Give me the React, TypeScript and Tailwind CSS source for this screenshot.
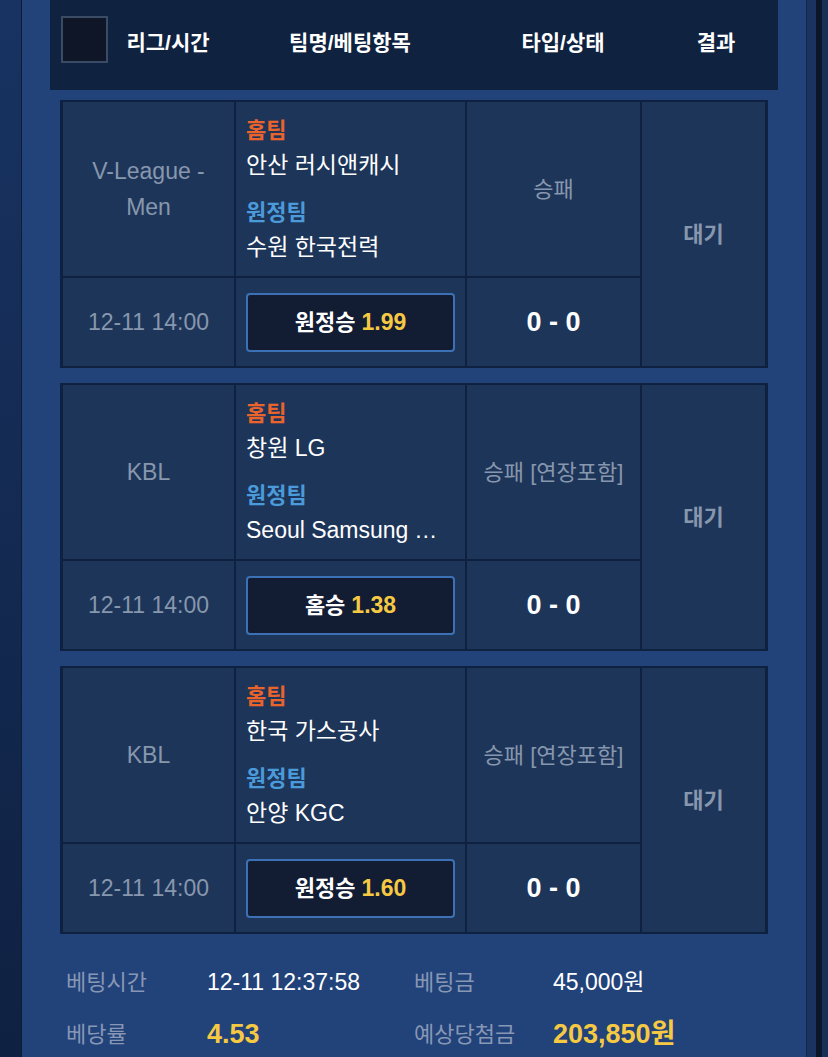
import type { ReactNode } from "react";

type Bet = {
  league: ReactNode;
  time: string;
  home: string;
  away: string;
  type: string;
  pick: string;
  odds: string;
};

const bets: Bet[] = [
  {
    league: (
      <>
        V-League -
        <br />
        Men
      </>
    ),
    time: "12-11 14:00",
    home: "안산 러시앤캐시",
    away: "수원 한국전력",
    type: "승패",
    pick: "원정승",
    odds: "1.99",
  },
  {
    league: "KBL",
    time: "12-11 14:00",
    home: "창원 LG",
    away: "Seoul Samsung Thunders",
    type: "승패 [연장포함]",
    pick: "홈승",
    odds: "1.38",
  },
  {
    league: "KBL",
    time: "12-11 14:00",
    home: "한국 가스공사",
    away: "안양 KGC",
    type: "승패 [연장포함]",
    pick: "원정승",
    odds: "1.60",
  },
];

function BetCard({ bet }: { bet: Bet }) {
  return (
    <div className="grid shrink-0 grid-cols-[171px_229px_173px_123px] grid-rows-[174px_88px] gap-[2px] border-x-[3px] border-y-2 border-[#0f2140] bg-[#0f2140]">
      <div className="flex items-center justify-center bg-[#1e355a] px-3 text-center text-[23px] leading-[36px] text-[#8797ad]">
        {bet.league}
      </div>
      <div className="flex min-w-0 flex-col justify-center bg-[#1e355a] pl-[10px] pr-[26px] text-[23px] leading-[35px]">
        <div className="text-[22px] font-bold text-[#e8642c]">홈팀</div>
        <div className="truncate text-white">{bet.home}</div>
        <div className="mt-3 text-[22px] font-bold text-[#4b9bdb]">원정팀</div>
        <div className="truncate text-white">{bet.away}</div>
      </div>
      <div className="flex items-center justify-center bg-[#1e355a] text-[22px] text-[#8797ad]">
        {bet.type}
      </div>
      <div className="row-span-2 flex items-center justify-center bg-[#1e355a] text-[22px] font-semibold text-[#8797ad]">
        대기
      </div>
      <div className="flex items-center justify-center bg-[#1e355a] text-[23px] text-[#8797ad]">
        {bet.time}
      </div>
      <div className="flex items-center bg-[#1e355a] px-[10px]">
        <div className="flex h-[59px] w-full items-center justify-center gap-[6px] rounded-[4px] border-2 border-[#3d71b6] bg-[#121c33] text-[22px] font-bold">
          <span className="text-white">{bet.pick}</span>
          <span className="text-[23px] text-[#f6c943]">{bet.odds}</span>
        </div>
      </div>
      <div className="flex items-center justify-center bg-[#1e355a] text-[27px] font-bold text-white">
        0 - 0
      </div>
    </div>
  );
}

export default function App() {
  return (
    <div
      className="flex h-[1057px] w-[828px] overflow-hidden bg-[#15305a]"
      style={{ fontFamily: '"Liberation Sans", "Noto Sans CJK KR", sans-serif' }}
    >
      <div className="w-[21px] shrink-0 bg-gradient-to-b from-[#183362] to-[#0f2142]" />
      <div className="w-px shrink-0 bg-[#0e1c35]" />

      <main className="flex w-[784px] shrink-0 flex-col bg-[#22427a]">
        <header className="mx-[28px] flex h-[90px] shrink-0 items-center bg-[#0f2240] text-[21px] font-bold text-white">
          <div className="mb-[11px] ml-[11px] h-[47px] w-[47px] border-2 border-[#3a4b66] bg-[#0f1628]" />
          <div className="mb-[5px] ml-[10px] w-[100px] text-center">리그/시간</div>
          <div className="mb-[5px] ml-[62px] w-[140px] text-center">팀명/베팅항목</div>
          <div className="mb-[5px] ml-[83px] w-[120px] text-center">타입/상태</div>
          <div className="mb-[5px] ml-[53px] w-[80px] text-center">결과</div>
        </header>

        <div className="mx-[38px] mt-[10px] flex shrink-0 flex-col gap-[15px]">
          {bets.map((bet, i) => (
            <BetCard key={i} bet={bet} />
          ))}
        </div>

        <div className="mt-[22px] grid shrink-0 grid-cols-[141px_207px_139px_1fr] pl-[44px] text-[22px]">
          <div className="flex h-[52px] items-center text-[#8797b4]">베팅시간</div>
          <div className="flex h-[52px] items-center text-[23px] text-white">12-11 12:37:58</div>
          <div className="flex h-[52px] items-center text-[#8797b4]">베팅금</div>
          <div className="flex h-[52px] items-center text-[23px] text-white">45,000원</div>
          <div className="flex h-[52px] items-center text-[#8797b4]">베당률</div>
          <div className="flex h-[52px] items-center text-[27px] font-bold text-[#f6c943]">4.53</div>
          <div className="flex h-[52px] items-center text-[#8797b4]">예상당첨금</div>
          <div className="flex h-[52px] items-center text-[27px] font-bold text-[#f6c943]">203,850원</div>
        </div>
      </main>

      <div className="w-px shrink-0 bg-[#13264a]" />
      <div className="w-[9px] shrink-0 bg-[#1a3360]" />
      <div className="w-[6px] shrink-0 bg-[#0b1628]" />
      <div className="flex-1 bg-[#163058]" />
    </div>
  );
}
